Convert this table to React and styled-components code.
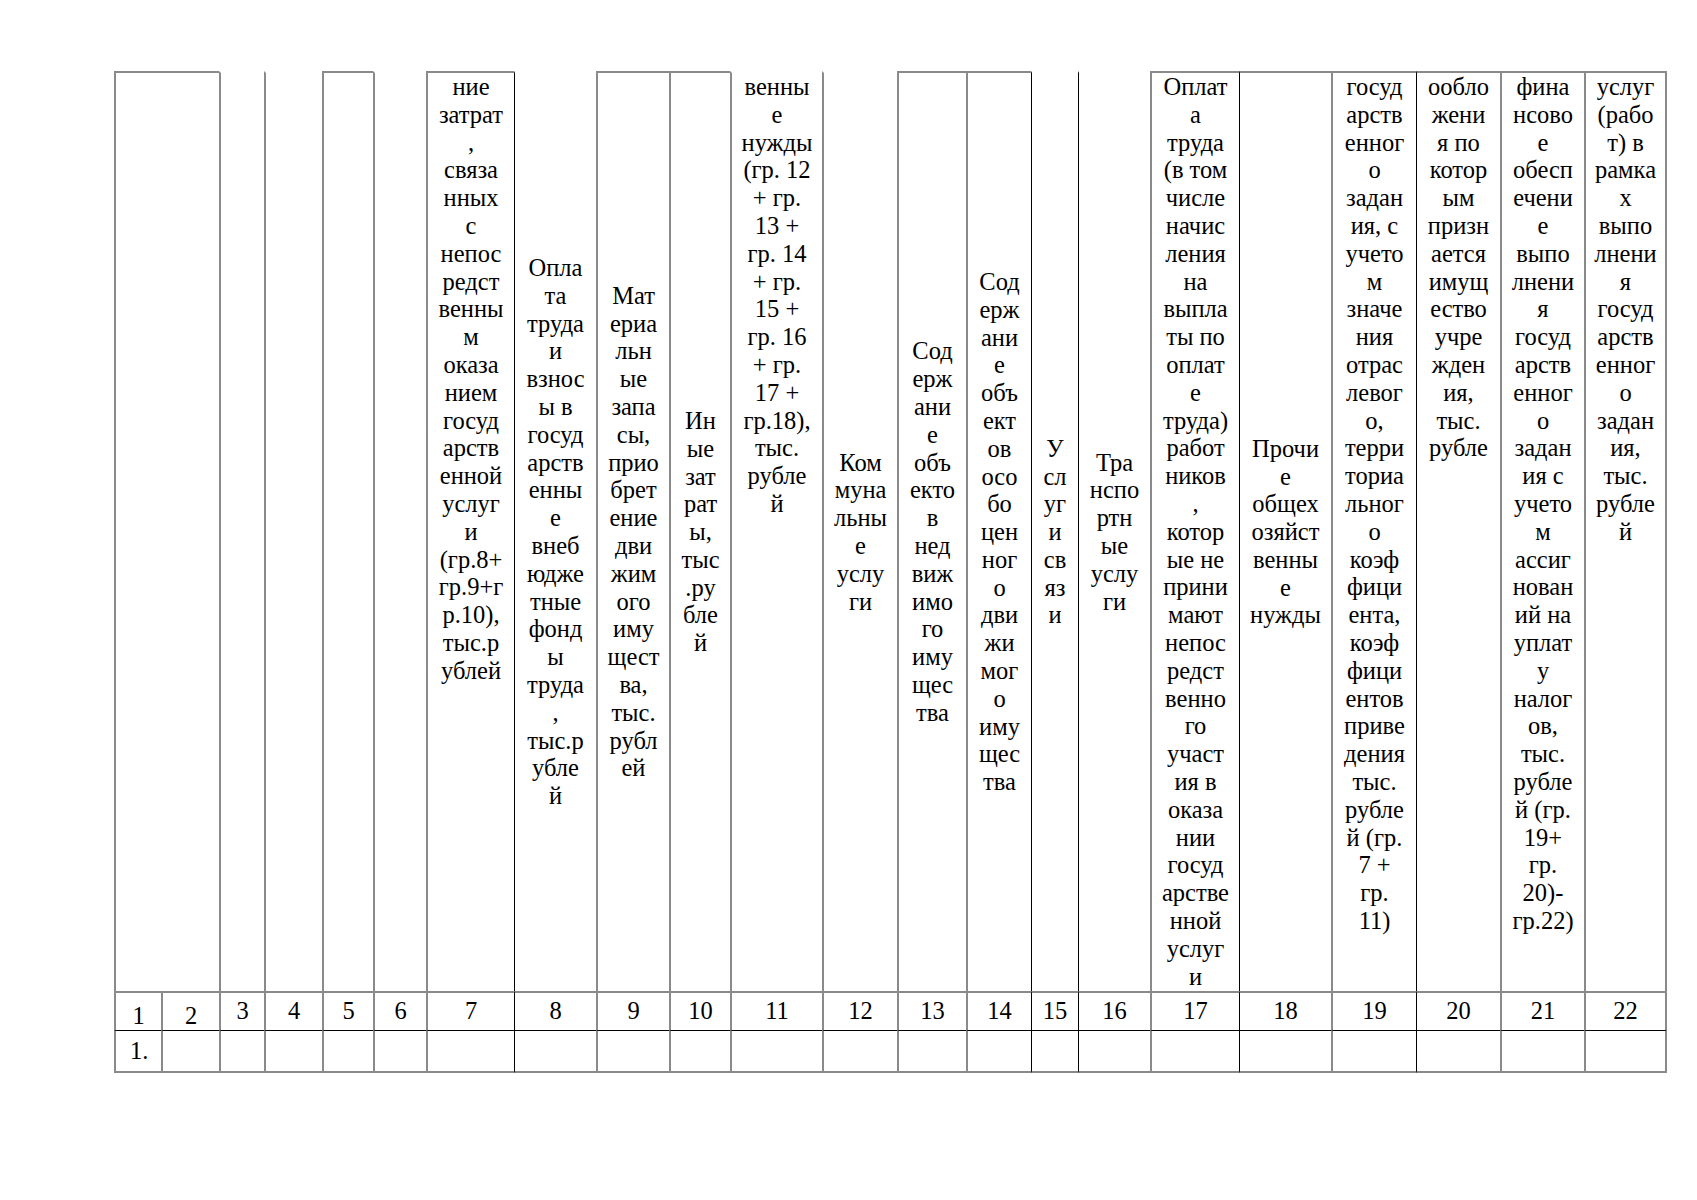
import React from "react";
import styled, { createGlobalStyle } from "styled-components";

const GlobalStyle = createGlobalStyle`
  body {
    margin: 0;
    background: #ffffff;
    font-family: "Liberation Serif", "Times New Roman", serif;
    color: #000;
  }
`;

const GRAY = "2px solid #8a8a8a";
const DARK = "1px solid #000";

const widths = [47, 58, 45, 58, 51, 53, 88, 82, 73, 61, 92, 75, 69, 65, 47, 72, 89, 92, 85, 84, 84, 83];

// header columns (1 and 2 share one header cell)
const headers = [
  { span: 2, top: true, text: "" },
  { text: "" },
  { text: "" },
  { top: true, text: "" },
  { text: "" },
  { top: true, align: "top", text: "ние|затрат|,|связа|нных|с|непос|редст|венны|м|оказа|нием|госуд|арств|енной|услуг|и|(гр.8+|гр.9+г|р.10),|тыс.р|ублей" },
  { dark: true, text: "Опла|та|труда|и|взнос|ы в|госуд|арств|енны|е|внеб|юдже|тные|фонд|ы|труда|,|тыс.р|убле|й" },
  { top: true, text: "Мат|ериа|льн|ые|запа|сы,|прио|брет|ение|дви|жим|ого|иму|щест|ва,|тыс.|рубл|ей" },
  { top: true, text: "Ин|ые|зат|рат|ы,|тыс|.ру|бле|й" },
  { align: "top", text: "венны|е|нужды|(гр. 12|+ гр.|13 +|гр. 14|+ гр.|15 +|гр. 16|+ гр.|17 +|гр.18),|тыс.|рубле|й" },
  { text: "Ком|муна|льны|е|услу|ги" },
  { top: true, text: "Сод|ерж|ани|е|объ|екто|в|нед|виж|имо|го|иму|щес|тва" },
  { top: true, text: "Сод|ерж|ани|е|объ|ект|ов|осо|бо|цен|ног|о|дви|жи|мог|о|иму|щес|тва" },
  { dark: true, text: "У|сл|уг|и|св|яз|и" },
  { dark: true, text: "Тра|нспо|ртн|ые|услу|ги" },
  { top: true, align: "top", text: "Оплат|а|труда|(в том|числе|начис|ления|на|выпла|ты по|оплат|е|труда)|работ|ников|,|котор|ые не|прини|мают|непос|редст|венно|го|участ|ия в|оказа|нии|госуд|арстве|нной|услуг|и" },
  { top: true, dark: true, text: "Прочи|е|общех|озяйст|венны|е|нужды" },
  { top: true, align: "top", text: "госуд|арств|енног|о|задан|ия, с|учето|м|значе|ния|отрас|левог|о,|терри|ториа|льног|о|коэф|фици|ента,|коэф|фици|ентов|приве|дения|тыс.|рубле|й (гр.|7 +|гр.|11)" },
  { top: true, dark: true, align: "top", text: "ообло|жени|я по|котор|ым|призн|ается|имущ|ество|учре|жден|ия,|тыс.|рубле" },
  { top: true, align: "top", text: "фина|нсово|е|обесп|ечени|е|выпо|лнени|я|госуд|арств|енног|о|задан|ия с|учето|м|ассиг|нован|ий на|уплат|у|налог|ов,|тыс.|рубле|й (гр.|19+|гр.|20)-|гр.22)" },
  { top: true, align: "top", end: true, text: "услуг|(рабо|т) в|рамка|х|выпо|лнени|я|госуд|арств|енног|о|задан|ия,|тыс.|рубле|й" },
];

// columns whose left line is drawn dark
const darkCols = [7, 14, 15, 17, 19];

const Sheet = styled.div`
  display: grid;
  grid-template-columns: ${widths.map((w) => `${w}px`).join(" ")};
  grid-template-rows: 920px 39px 43px;
  width: max-content;
  margin: 71px 0 0 114px;
  font-size: 24.5px;
`;

const Cell = styled.div`
  box-sizing: border-box;
  border-left: ${(p) => (p.$dark ? DARK : GRAY)};
  border-right: ${(p) => (p.$end ? GRAY : "none")};
  min-width: 0;
`;

const HeadCell = styled(Cell)`
  grid-column: span ${(p) => p.$span || 1};
  border-top: ${(p) => (p.$top ? GRAY : "2px solid transparent")};
  display: flex;
  flex-direction: column;
  align-items: center;
  justify-content: ${(p) => (p.$align === "top" ? "flex-start" : "center")};
  overflow: hidden;
`;

const Line = styled.span`
  display: block;
  white-space: nowrap;
  line-height: 27.8px;
  text-align: center;
`;

const NumCell = styled(Cell)`
  border-top: ${GRAY};
  display: flex;
  align-items: center;
  justify-content: center;
  padding-top: ${(p) => (p.$low ? "10px" : "0")};
  line-height: 1;
`;

const DataCell = styled(Cell)`
  border-top: ${DARK};
  border-bottom: ${GRAY};
  display: flex;
  align-items: center;
  padding-left: 14px;
  line-height: 1;
`;

const App = () => {
  return (
    <>
      <GlobalStyle />
      <Sheet>
        {headers.map((h, i) => (
          <HeadCell
            key={`h${i}`}
            $span={h.span}
            $top={h.top}
            $dark={h.dark}
            $end={h.end}
            $align={h.align}
          >
            {h.text &&
              h.text.split("|").map((line, j) => <Line key={j}>{line}</Line>)}
          </HeadCell>
        ))}

        {widths.map((_, i) => (
          <NumCell
            key={`n${i}`}
            $low={i < 2}
            $dark={darkCols.includes(i)}
            $end={i === widths.length - 1}
          >
            {i + 1}
          </NumCell>
        ))}

        {widths.map((_, i) => (
          <DataCell
            key={`d${i}`}
            $dark={darkCols.includes(i)}
            $end={i === widths.length - 1}
          >
            {i === 0 ? "1." : ""}
          </DataCell>
        ))}
      </Sheet>
    </>
  );
};

export default App;
